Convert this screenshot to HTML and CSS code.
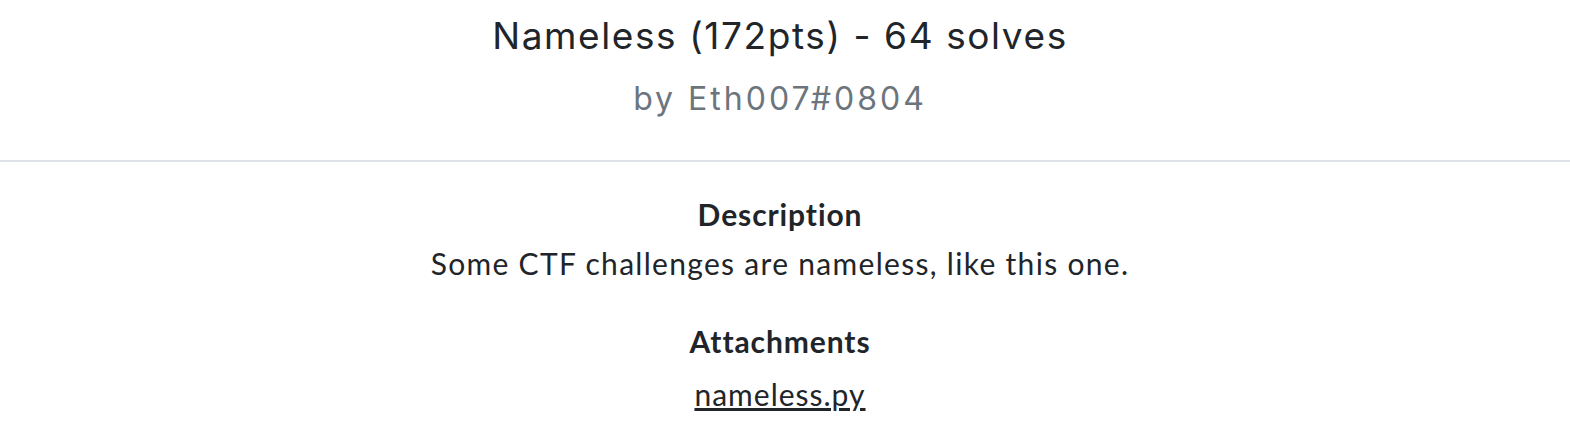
FILE: index.html
```html
<!DOCTYPE html>
<html lang="en">
<head>
<meta charset="utf-8">
<title>Nameless</title>
<link rel="stylesheet" href="styles.css">
</head>
<body>
<header class="head">
  <h1 class="title">Nameless (172pts) - 64 solves</h1>
  <h2 class="author">by Eth007#0804</h2>
</header>
<hr class="divider">
<main class="content">
  <h3 class="label">Description</h3>
  <p class="text">Some CTF challenges are nameless, like this one.</p>
  <h3 class="label label-gap">Attachments</h3>
  <a class="file" href="#">nameless.py</a>
</main>
</body>
</html>
```
FILE: styles.css
```css
html, body {
  margin: 0;
  padding: 0;
  background: #fff;
}
body {
  color: #212529;
  text-align: center;
}
.head {
  display: flex;
  flex-direction: column;
  align-items: center;
  padding: 10px 10px 0 0;
}
.title {
  margin: 0;
  font-family: Inter, "Liberation Sans", sans-serif;
  font-weight: 400;
  font-size: 37px;
  line-height: 52px;
  letter-spacing: 1.6px;
  color: #212529;
}
.author {
  margin: 12px 0 0;
  font-family: Inter, "Liberation Sans", sans-serif;
  font-weight: 400;
  font-size: 32px;
  line-height: 50px;
  letter-spacing: 3px;
  color: #6c757d;
}
.divider {
  margin: 36px 0 0;
  border: 0;
  height: 2px;
  background: #dee2e6;
}
.content {
  display: flex;
  flex-direction: column;
  align-items: center;
  padding: 34px 10px 0 0;
  font-family: Lato, "Liberation Sans", sans-serif;
}
.label {
  margin: 0;
  font-size: 30px;
  font-weight: 700;
  line-height: 36px;
  letter-spacing: 0.9px;
}
.label-gap {
  margin-top: 42px;
}
.text {
  margin: 13px 0 0;
  font-size: 30px;
  line-height: 36px;
  letter-spacing: 1.3px;
}
.file {
  margin-top: 17px;
  font-size: 30px;
  line-height: 36px;
  letter-spacing: 1px;
  color: #212529;
  text-decoration: underline;
}
```
